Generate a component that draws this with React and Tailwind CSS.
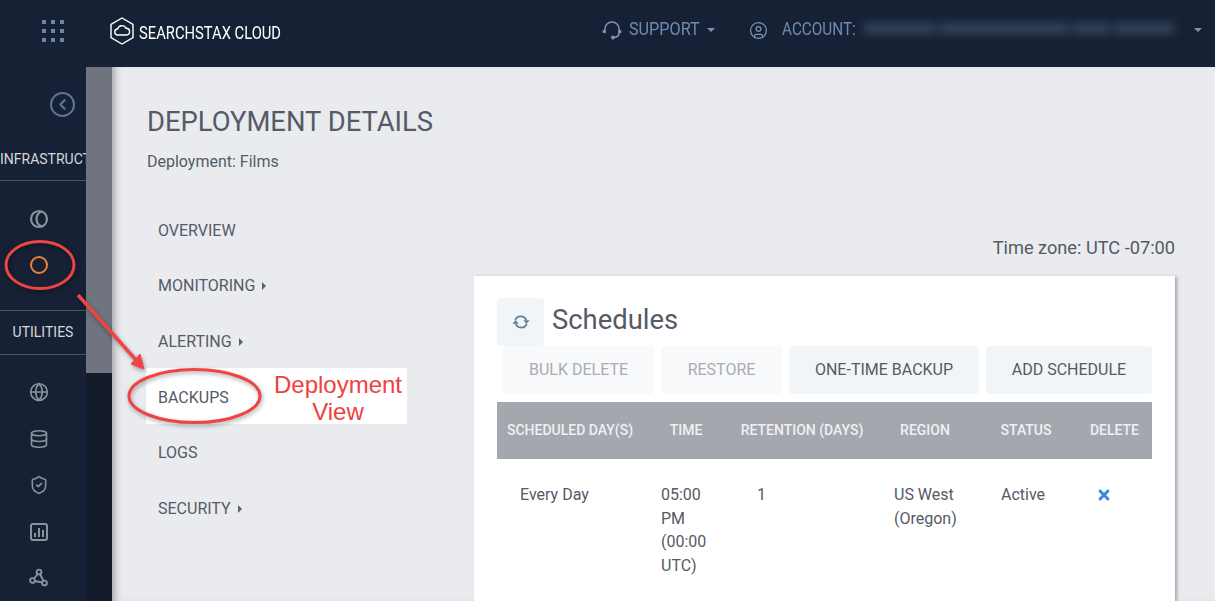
import { Globe, Database, ShieldCheck, CircleUser, ChevronLeft } from 'lucide-react';
import { FaTimes } from 'react-icons/fa';

const navItems = [
  { label: 'OVERVIEW' },
  { label: 'MONITORING', caret: true },
  { label: 'ALERTING', caret: true },
  { label: 'BACKUPS' },
  { label: 'LOGS' },
  { label: 'SECURITY', caret: true },
];

function Caret() {
  return <span className="ml-[7px] inline-block border-y-[4px] border-l-[4px] border-y-transparent border-l-[#5a6070]" />;
}

function DownCaret() {
  return <span className="inline-block border-x-[4px] border-t-[4px] border-x-transparent border-t-[#7d93b0]" />;
}

function Header() {
  return (
    <header className="flex h-[67px] shrink-0 items-center bg-[#162135] pb-[5px]">
      <div className="ml-[42px] grid w-[22px] shrink-0 grid-cols-3 gap-[5px]">
        {[0, 1, 2, 3, 4, 5, 6, 7, 8].map((i) => (
          <span key={i} className="h-[4px] w-[4px] bg-[#6f86a3]" />
        ))}
      </div>
      <svg className="ml-[46px] shrink-0" width="24" height="28" viewBox="0 0 24 28" fill="none" stroke="#fff" strokeWidth="1.4">
        <path d="M12 1 L23 7.5 V20.5 L12 27 L1 20.5 V7.5 Z" />
        <path d="M8 18 a3 3 0 0 1 -.4 -6 a4.5 4.5 0 0 1 8.4 -.8 a3.4 3.4 0 0 1 .4 6.8 Z" />
      </svg>
      <span className="ml-[5px] mt-[2px] w-[142px] shrink-0 origin-left scale-x-[0.82] whitespace-nowrap text-[18px] text-white">SEARCHSTAX CLOUD</span>
      <svg className="ml-[321px] mb-[2px] shrink-0" width="20" height="20" viewBox="0 0 20 20" fill="none" stroke="#7d93b0" strokeWidth="1.6">
        <path d="M3 13 V9 a7 7 0 0 1 14 0 V13" />
        <path d="M2 10 V13 M18 10 V13" strokeWidth="2.6" />
        <path d="M17 13 q0 4 -5 4.5" />
        <circle cx="11" cy="17.5" r="1.2" fill="#7d93b0" />
      </svg>
      <span className="ml-[7px] mb-[6px] w-[71px] shrink-0 origin-left scale-x-[0.9] whitespace-nowrap text-[18px] text-[#6f8bb0]">SUPPORT</span>
      <span className="ml-[7px] mb-[2px] flex shrink-0"><DownCaret /></span>
      <CircleUser className="ml-[34px] mb-[2px] shrink-0 text-[#7d93b0]" size={19} strokeWidth={1.6} />
      <span className="ml-[14px] mb-[6px] w-[74px] shrink-0 origin-left scale-x-[0.85] whitespace-nowrap text-[18px] text-[#6f8bb0]">ACCOUNT:</span>
      <div className="ml-[2px] mb-[6px] flex w-[334px] shrink-0 gap-[4px] overflow-hidden px-[6px] py-[6px] blur-[5px]">
        <span className="h-[11px] w-[72px] bg-[#35445b]" />
        <span className="h-[11px] w-[128px] bg-[#35445b]" />
        <span className="h-[11px] w-[38px] bg-[#35445b]" />
        <span className="h-[11px] w-[60px] bg-[#35445b]" />
      </div>
      <span className="ml-[2px] mb-[2px] flex shrink-0"><DownCaret /></span>
    </header>
  );
}

function Sidebar() {
  const iconClass = 'text-[#8b929c]';
  return (
    <aside className="flex w-[86px] shrink-0 flex-col bg-[#162135]">
      <div className="flex h-[74px] items-center pl-[50px]">
        <span className="flex h-[25px] w-[25px] items-center justify-center rounded-full border-2 border-[#5c7796]">
          <ChevronLeft size={17} strokeWidth={3} className="text-[#5c7796]" />
        </span>
      </div>
      <div className="h-[40px] overflow-hidden whitespace-nowrap border-b border-[#4b5360] pt-[8px] text-[14px] leading-[20px] text-[#d5d8dd]">
        INFRASTRUCTURE
      </div>
      <div className="flex h-[130px] flex-col items-center gap-[27px] border-b border-[#4b5360] pr-[8px] pt-[28px]">
        <svg width="20" height="20" viewBox="0 0 20 20" fill="none" stroke="#8b929c" strokeWidth="2.2">
          <circle cx="10" cy="10" r="8" />
          <path d="M12.5 2.6 a8 8 0 0 0 0 14.8" />
        </svg>
        <span className="h-[18px] w-[18px] rounded-full border-2 border-[#f08030]" />
      </div>
      <div className="flex h-[44px] items-center justify-center border-b border-[#4b5360] text-[14px] text-[#d5d8dd]">UTILITIES</div>
      <div className="flex flex-col items-center gap-[26.5px] pr-[8px] pt-[27px]">
        <Globe size={20} strokeWidth={1.9} className={iconClass} />
        <Database size={20} strokeWidth={1.9} className={iconClass} />
        <ShieldCheck size={20} strokeWidth={1.9} className={iconClass} />
        <svg width="20" height="20" viewBox="0 0 20 20" fill="none" stroke="#8b929c" strokeWidth="2">
          <rect x="2" y="2" width="16" height="16" rx="2" />
          <path d="M6 15 V11 M10 15 V6 M14 15 V8" />
        </svg>
        <svg width="20" height="20" viewBox="0 0 20 20" fill="none" stroke="#8b929c" strokeWidth="1.9">
          <circle cx="10" cy="4" r="2.4" />
          <circle cx="3.5" cy="12.5" r="2.4" />
          <circle cx="15.5" cy="15" r="2.4" />
          <path d="M8.8 6 L5 10.5 M11 6 L14.5 13 M6 13 L13 14.5" />
        </svg>
      </div>
    </aside>
  );
}

function RefreshIcon() {
  return (
    <svg width="18" height="16" viewBox="0 0 18 16" fill="#64809f" stroke="#64809f">
      <path d="M3.2 6 A6 6 0 0 1 14.4 6.5" fill="none" strokeWidth="1.8" />
      <path d="M14.8 9.8 A6 6 0 0 1 3.6 9.5" fill="none" strokeWidth="1.8" />
      <path d="M11.3 6.3 H17.6 L14.4 10 Z" stroke="none" />
      <path d="M0.4 9.7 H6.7 L3.6 6 Z" stroke="none" />
    </svg>
  );
}

function SchedulesCard() {
  const cols = 'grid grid-cols-[146px_86px_146px_100px_102px_75px]';
  return (
    <section className="mt-[16px] flex-1 bg-white px-[23px] pt-[22px] shadow-[2px_1px_3px_rgba(0,0,0,0.3)]">
      <div className="flex items-center">
        <button className="flex h-[48px] w-[47px] items-center justify-center rounded bg-[#f2f5f7]">
          <RefreshIcon />
        </button>
        <h2 className="ml-[8px] pb-[2px] text-[27.4px] text-[#555a66]">Schedules</h2>
      </div>
      <div className="flex gap-[7px] pl-[6px]">
        <button className="h-[48px] w-[151px] rounded bg-[#f8f9fa] text-[16px] text-[#a9acb2]">BULK DELETE</button>
        <button className="h-[48px] w-[121px] rounded bg-[#f8f9fa] text-[16px] text-[#a9acb2]">RESTORE</button>
        <button className="h-[48px] w-[190px] rounded bg-[#f2f5f7] text-[16px] text-[#555a66]">ONE-TIME BACKUP</button>
        <button className="h-[48px] w-[166px] rounded bg-[#f2f5f7] text-[16px] text-[#555a66]">ADD SCHEDULE</button>
      </div>
      <div className={`${cols} mt-[8px] h-[57px] items-center bg-[#a5a7af] text-center text-[14px] font-medium text-[#f0f0f2]`}>
        <span>SCHEDULED DAY(S)</span>
        <span>TIME</span>
        <span>RETENTION (DAYS)</span>
        <span>REGION</span>
        <span>STATUS</span>
        <span>DELETE</span>
      </div>
      <div className={`${cols} pt-[24px] text-[16px] leading-[23.7px] text-[#555a66]`}>
        <span className="pl-[23px]">Every Day</span>
        <span className="pl-[18px] pr-[8px]">05:00 PM (00:00 UTC)</span>
        <span className="pl-[28px]">1</span>
        <span className="pl-[19px]">US West (Oregon)</span>
        <span className="pl-[26px]">Active</span>
        <span className="pl-[19px] pt-[4px]"><FaTimes size={16} className="text-[#3b87d8]" /></span>
      </div>
    </section>
  );
}

function Main() {
  return (
    <main className="flex min-w-0 flex-1 flex-col bg-[#e9ebef] pl-[35px] pr-[40px] pt-[39px] shadow-[inset_8px_0_8px_-6px_rgba(0,0,0,0.35)]">
      <h1 className="text-[27.4px] leading-[32px] text-[#555a66]">DEPLOYMENT DETAILS</h1>
      <p className="mt-[12px] text-[16px] leading-[24px] text-[#555a66]">Deployment: Films</p>
      <div className="flex flex-1">
        <nav className="w-[327px] pl-[11px] pt-[29px] text-[16px] text-[#555a66]">
          {navItems.map((item) => (
            <div key={item.label} className="flex h-[55.6px] items-center">
              {item.label}
              {item.caret && <Caret />}
            </div>
          ))}
        </nav>
        <div className="flex flex-1 flex-col pt-[62px]">
          <p className="text-right text-[18.2px] leading-[24px] text-[#555a66]">Time zone: UTC -07:00</p>
          <SchedulesCard />
        </div>
      </div>
    </main>
  );
}

// red call-outs drawn on top of the screenshot
function Annotations() {
  return (
    <>
      <div className="absolute left-[146px] top-[368px] h-[56px] w-[261px] bg-white" />
      <div className="absolute left-[158px] top-[386px] text-[16px] leading-[24px] text-[#555a66]">BACKUPS</div>
      <div className="absolute left-[269px] top-[371px] w-[138px] text-center text-[24px] leading-[27px] text-[#f0403f]" style={{ fontFamily: '"Liberation Sans", sans-serif' }}>
        Deployment View
      </div>
      <svg className="pointer-events-none absolute left-0 top-0 drop-shadow-[1px_2px_2px_rgba(0,0,0,0.35)]" width="1215" height="601" fill="none" stroke="#ef4444">
        <ellipse cx="40" cy="265" rx="34" ry="23.5" strokeWidth="3" />
        <ellipse cx="194.5" cy="396" rx="65.5" ry="26.5" strokeWidth="3" />
        <path d="M78 295 L136 360" strokeWidth="3.5" />
        <path d="M144 369 L131 364 L140 354 Z" fill="#ef4444" />
      </svg>
    </>
  );
}

export default function App() {
  return (
    <div className="relative h-[601px] w-[1215px] overflow-hidden" style={{ fontFamily: 'Roboto, sans-serif' }}>
      <Header />
      <div className="flex h-[534px]">
        <Sidebar />
        <div className="w-[26px] shrink-0 bg-[#141b2b]">
          <div className="h-[306px] bg-[#6f747e]" />
        </div>
        <Main />
      </div>
      <Annotations />
    </div>
  );
}
